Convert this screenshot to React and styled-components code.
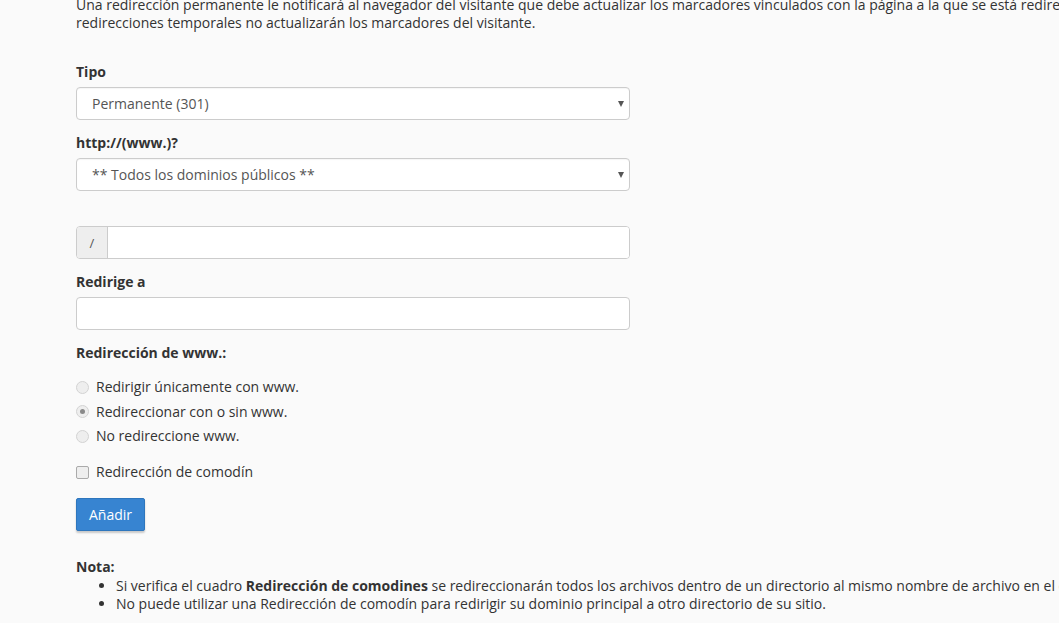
import React from 'react';
import styled, { createGlobalStyle } from 'styled-components';

const GlobalStyle = createGlobalStyle`
    html, body {
        margin: 0;
        padding: 0;
        background: #fafafa;
        overflow: hidden;
    }
    body {
        font-family: "Open Sans", "Liberation Sans", sans-serif;
        font-size: 14px;
        color: #333;
    }
`;

const Page = styled.div`
    width: 1130px;
    padding-left: 76px;
    height: 623px;
    overflow: hidden;
`;

const Intro = styled.p`
    margin: -4px 0 0;
    line-height: 18px;
`;

const Form = styled.form`
    margin-top: 30px;
    width: 554px;
`;

const Group = styled.div`
    margin-top: ${p => p.$top || 0}px;
    margin-bottom: 13px;
`;

const Label = styled.label`
    display: block;
    font-weight: 700;
    line-height: 20px;
    margin-bottom: 5px;
`;

const SelectBox = styled.div`
    position: relative;
    height: 33px;
    box-sizing: border-box;
    border: 1px solid #ccc;
    border-radius: 4px;
    background: #fff;
    display: flex;
    align-items: center;
    padding-left: 15px;
    color: #555;
    box-shadow: inset 0 1px 1px rgba(0,0,0,0.04);
`;

const Caret = styled.span`
    position: absolute;
    right: 5px;
    top: 13px;
    width: 0;
    height: 0;
    border-left: 3.5px solid transparent;
    border-right: 3.5px solid transparent;
    border-top: 6px solid #555;
`;

const InputGroup = styled.div`
    display: flex;
    height: 33px;
    box-sizing: border-box;
    border: 1px solid #ccc;
    border-radius: 4px;
    background: #fff;
    overflow: hidden;
`;

const Addon = styled.span`
    width: 30px;
    background: #eee;
    border-right: 1px solid #ccc;
    color: #555;
    display: flex;
    align-items: center;
    justify-content: center;
    font-size: 13px;
`;

const TextInput = styled.input`
    flex: 1;
    height: 33px;
    box-sizing: border-box;
    border: 1px solid #ccc;
    border-radius: 4px;
    background: #fff;
    outline: none;
    padding: 0 12px;
    font: inherit;
    width: 100%;
    display: block;
    ${p => p.$bare && `
        border: none;
        border-radius: 0;
        height: auto;
    `}
`;

const OptionList = styled.div`
    display: flex;
    flex-direction: column;
    gap: 4.5px;
    margin-top: 14px;
`;

const Option = styled.label`
    display: flex;
    align-items: center;
    line-height: 20px;
    margin-top: ${p => p.$top || 0}px;
    gap: 7px;
`;

const Radio = styled.span`
    width: 11px;
    height: 11px;
    border-radius: 50%;
    border: 1px solid #d3d3d3;
    background: #eee;
    display: flex;
    align-items: center;
    justify-content: center;
    &::after {
        content: '';
        width: 5px;
        height: 5px;
        border-radius: 50%;
        background: ${p => (p.$checked ? '#8a8a8a' : 'transparent')};
    }
`;

const Check = styled.span`
    width: 11px;
    height: 11px;
    border-radius: 2px;
    border: 1px solid #aaa;
    background: #eee;
`;

const Button = styled.button`
    margin-top: 16px;
    height: 33px;
    padding: 0 12px;
    border: 1px solid #2e76bd;
    border-radius: 2px;
    background: #3784d1;
    color: #fff;
    font: inherit;
    box-shadow: 0 2px 2px rgba(0,0,0,0.2);
    cursor: pointer;
`;

const Note = styled.div`
    margin-top: 27px;
    line-height: 18.5px;
    white-space: nowrap;
`;

const NoteTitle = styled.div`
    font-weight: 700;
`;

const NoteList = styled.ul`
    margin: 0;
    padding-left: 40px;
`;

const App = () => {
    return (
        <Page>
            <GlobalStyle />
            <Intro>
                Una redirección permanente le notificará al navegador del visitante que debe actualizar los marcadores vinculados con la página a la que se está redireccionando. Las redirecciones temporales no actualizarán los marcadores del visitante.
            </Intro>
            <Form>
                <Group>
                    <Label>Tipo</Label>
                    <SelectBox>Permanente (301)<Caret /></SelectBox>
                </Group>
                <Group>
                    <Label>http://(www.)?</Label>
                    <SelectBox>** Todos los dominios públicos **<Caret /></SelectBox>
                </Group>
                <Group $top={35}>
                    <InputGroup>
                        <Addon>/</Addon>
                        <TextInput $bare />
                    </InputGroup>
                </Group>
                <Group>
                    <Label>Redirige a</Label>
                    <TextInput />
                </Group>
                <Label>Redirección de www.:</Label>
                <OptionList>
                    <Option><Radio />Redirigir únicamente con www.</Option>
                    <Option><Radio $checked />Redireccionar con o sin www.</Option>
                    <Option><Radio />No redireccione www.</Option>
                </OptionList>
                <Option $top={16}><Check />Redirección de comodín</Option>
                <Button type="button">Añadir</Button>
            </Form>
            <Note>
                <NoteTitle>Nota:</NoteTitle>
                <NoteList>
                    <li>Si verifica el cuadro <b>Redirección de comodines</b> se redireccionarán todos los archivos dentro de un directorio al mismo nombre de archivo en el directorio redireccionado.</li>
                    <li>No puede utilizar una Redirección de comodín para redirigir su dominio principal a otro directorio de su sitio.</li>
                </NoteList>
            </Note>
        </Page>
    );
};

export default App;
